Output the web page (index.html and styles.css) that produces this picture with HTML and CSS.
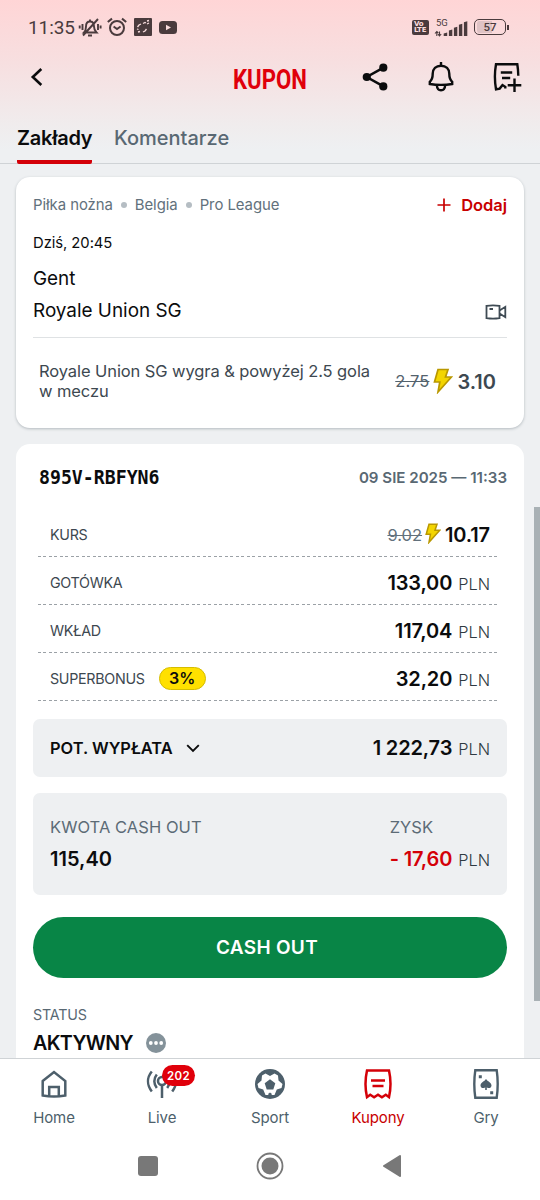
FILE: index.html
```html
<!DOCTYPE html>
<html lang="pl">
<head>
<meta charset="utf-8">
<title>Kupon</title>
<link rel="stylesheet" href="styles.css">
</head>
<body>
<div class="screen">
  <header class="top">
    <div class="statusbar">
      <span class="clock">11:35</span>
      <svg class="st-bell" width="24" height="20" viewBox="0 0 24 20" fill="none" stroke="#4a3b3d" stroke-width="1.9"><path d="M6 15.500c2-2 2-3 2-6 0-3 1.500-5 4-5s4 2 4 5c0 3 .5 4 2.500 6zM5 18.500 20 2M10 18.500h4M4.500 7v6M1.700 8.500v3M20 7v6M22.600 8.500v3M12 2.500v2"/></svg>
      <svg class="st-alarm" width="20" height="20" viewBox="0 0 20 20" fill="none" stroke="#4a3b3d" stroke-width="2"><circle cx="10" cy="11" r="7"/><path d="m6.600 9.500 3.400 2.500 3.600-2.500M.8 5 5 1.600M19.200 5 15 1.600"/></svg>
      <svg class="st-app" width="18" height="18" viewBox="0 0 18 18"><rect width="18" height="18" rx="1" fill="#4a3b3d"/><path d="m3.500 9 1.500-2 2-1M3 11l1.500.5M4 14l2-.5M9 14l2-1 1.500-2M9 5.500l2-1 1 .5M13 3l2-.5M13 6l2-1" fill="none" stroke="#f7dcdd" stroke-width="1.300"/></svg>
      <svg class="st-tube" width="18" height="13" viewBox="0 0 18 13"><rect width="18" height="13" rx="3.500" fill="#4a3b3d"/><path d="M7 3.700v5.600l5-2.800z" fill="#f9dcdd"/></svg>
      <span class="spacer"></span>
      <span class="volte"><span>Vo</span><span>LTE</span></span>
      <span class="network"><span class="fiveg">5G</span>
        <svg width="34" height="16" viewBox="0 0 34 16" fill="#4a3b3d"><path d="M2.800 15v-4.500M1 12.500l1.800-2 1.500 1.500M5.500 10.500V15M4 13.200 5.500 15l1.700-2" fill="none" stroke="#4a3b3d" stroke-width="1.100"/><path d="M9.700 12.500l3.500-1V15H9.700zM14.900 9.500l3.400-1V15h-3.400zM19.900 6.700l3.400-1V15h-3.400zM24.900 3.800l3.400-1V15h-3.400zM29.900 1.300l3.400-1V15h-3.400z"/></svg>
      </span>
      <span class="battery">57</span><i class="nub"></i>
    </div>
    <div class="navbar">
      <svg class="back" width="14" height="20" viewBox="0 0 14 20" fill="none" stroke="#0b0c0d" stroke-width="2.600"><path d="m12.300 2-8.500 8 8.500 8"/></svg>
      <h1 class="title">KUPON</h1>
      <svg class="share" width="28" height="30" viewBox="0 0 28 30" fill="#0b0c0d"><path d="M21.500 5.700 4.700 15l16.800 9.300" fill="none" stroke="#0b0c0d" stroke-width="2.500"/><circle cx="21.300" cy="5.700" r="4.100"/><circle cx="4.800" cy="15" r="4.100"/><circle cx="21.300" cy="24.400" r="4.100"/></svg>
      <svg class="bell" width="28" height="32" viewBox="0 0 28 32" fill="none" stroke="#0b0c0d" stroke-width="2.400"><path d="M14 1v4M2.800 23v-2.200c3-2.500 2.900-5 2.900-8C5.700 8 9 4.700 14 4.700s8.300 3.300 8.300 8.100c0 3-.1 5.500 2.900 8V23c-7.300 1.200-15.100 1.200-22.400 0zM9.800 24c.2 3 1.700 5.300 4.200 5.300s4-2.300 4.200-5.300"/></svg>
      <svg class="addslip" width="30" height="31" viewBox="0 0 30 31" fill="none" stroke="#0b0c0d" stroke-width="2.400"><path d="M13.300 26.500v-1.700L10.500 23 7.700 26.600 4 27.300C2.500 18.500 2.500 10.500 4 2.200h21.300c.6 3.500.9 7 1 11.600M8.800 10.500h11.400M10 16h8.200M22.500 16.500V30M15.700 23.200h13.600"/></svg>
    </div>
    <nav class="tabs"><span class="tab active">Zakłady</span><span class="tab second">Komentarze</span></nav>
  </header>

  <main class="content">
    <section class="card event">
      <div class="crumbs"><span>Piłka nożna</span><i class="dot"></i><span>Belgia</span><i class="dot"></i><span>Pro League</span><span class="spacer"></span>
        <svg width="14" height="14" viewBox="0 0 14 14" stroke="#c80000" stroke-width="1.700"><path d="M7 .5v13M.5 7h13"/></svg><b class="add">Dodaj</b></div>
      <div class="when">Dziś, 20:45</div>
      <div class="team home">Gent</div>
      <div class="team away"><span>Royale Union SG</span>
        <svg width="22" height="16" viewBox="0 0 22 16" fill="none" stroke="#3f4b54" stroke-width="1.800"><path d="M1.500 1.800q6.500-1 13 0v12.400q-6.500 1-13 0zM15 6.300l5.300-3.500v10.400L15 9.700M4.500 5H8"/></svg></div>
      <div class="pick"><p class="market">Royale Union SG wygra &amp; powyżej 2.5 gola w meczu</p>
        <div class="odds"><s>2.75</s>
          <svg width="20" height="26" viewBox="0 0 20 26"><path d="M5 1.500h10l-2.500 7.500H18.500L5 24 6.800 14H1.500z" fill="#f3d500" stroke="#b99800" stroke-width="1.700"/></svg>
          <b>3.10</b></div></div>
    </section>

    <section class="card slip">
      <div class="slip-head"><span class="code">895V-RBFYN6</span><span class="date">09 SIE 2025 — 11:33</span></div>
      <div class="rows">
        <div class="row"><span class="label">KURS</span><span class="value boosted"><s>9.02</s><svg width="16" height="21" viewBox="0 0 20 26"><path d="M5 1.500h10l-2.500 7.500H18.500L5 24 6.800 14H1.500z" fill="#f3d500" stroke="#b99800" stroke-width="1.900"/></svg><b>10.17</b></span></div>
        <div class="row"><span class="label">GOTÓWKA</span><span class="value"><b>133,00</b><em>PLN</em></span></div>
        <div class="row"><span class="label">WKŁAD</span><span class="value"><b>117,04</b><em>PLN</em></span></div>
        <div class="row"><span class="label">SUPERBONUS</span><span class="bonus">3%</span><span class="value"><b>32,20</b><em>PLN</em></span></div>
      </div>
      <div class="box payout"><span class="payout-label">POT. WYPŁATA</span><svg width="14" height="9" viewBox="0 0 14 9" fill="none" stroke="#0b0c0d" stroke-width="1.900"><path d="m1.200 1.200 5.800 5.800 5.800-5.800"/></svg><span class="value"><b>1 222,73</b><em>PLN</em></span></div>
      <div class="box cash">
        <div><div class="cash-label">KWOTA CASH OUT</div><div class="value"><b class="amount">115,40</b></div></div>
        <div><div class="cash-label">ZYSK</div><div class="value loss"><b>- 17,60</b><em>PLN</em></div></div>
      </div>
      <button class="cashout">CASH OUT</button>
      <div class="status-label">STATUS</div>
      <div class="status"><span>AKTYWNY</span><svg width="20" height="20" viewBox="0 0 20 20"><circle cx="10" cy="10" r="10" fill="#84929a"/><g fill="#fff"><circle cx="4.800" cy="10" r="1.900"/><circle cx="10" cy="10" r="1.900"/><circle cx="15.200" cy="10" r="1.900"/></g></svg></div>
    </section>
    <i class="scrollbar"></i>
  </main>

  <nav class="bottom">
    <a class="item"><svg width="32" height="32" viewBox="0 0 32 32" fill="none" stroke="#4d5f6b" stroke-width="2.500"><path d="M4.700 13 16 4l11.300 9v14.500q-11.300 2-22.600 0zM11.200 28.500V19h9.600v9.500"/></svg><span>Home</span></a>
    <a class="item live"><svg width="32" height="32" viewBox="0 0 32 32" fill="none" stroke="#4d5f6b" stroke-width="2.500"><circle cx="16" cy="13" r="4"/><path d="M16 17v13M5.800 3.500c-5 6-5 13.500 0 20M10.800 6.500c-3.300 4-3.300 9.500 0 13.500M26.200 3.500c5 6 5 13.500 0 20M21.200 6.500c3.300 4 3.300 9.500 0 13.500"/></svg><span class="badge">202</span><span>Live</span></a>
    <a class="item"><svg width="32" height="32" viewBox="0 0 32 32"><circle cx="16" cy="16" r="15" fill="#4d5f6b"/><path d="M11.500 5.500 16 8l4.500-2.500 3.500 2 .5 5 4 3.500-1 4-4.700 1.500L20.500 27h-9l-2.300-5.500L4.500 20l-1-4 4-3.500.5-5z" fill="#fff"/><path d="m16 11.300 5.300 3.900-2 6.200h-6.600l-2-6.200zM14 26l2-1.500 2 1.500-2 3z" fill="#4d5f6b"/></svg><span>Sport</span></a>
    <a class="item current"><svg width="32" height="32" viewBox="0 0 32 32" fill="none" stroke="#d40008" stroke-width="2.500"><path d="M5 2.500h22q3 13.500 0 26.700l-3.200-2.400-3.900 2.500-3.900-2.500-3.900 2.500-3.900-2.500L5 29.200Q2 16 5 2.500zM9 12.500h14M10.500 18h11"/></svg><span>Kupony</span></a>
    <a class="item"><svg width="32" height="32" viewBox="0 0 32 32" fill="none" stroke="#4d5f6b" stroke-width="2.400"><path d="M5.300 2.200h21.400q2 13.800 0 27.600H5.300q-2-13.800 0-27.600z"/><g fill="#4d5f6b" stroke="none"><path d="M16 11c1.500 2.500 5.500 3.500 5.500 6.500 0 2.500-3 3.500-4.700 1.700V22h-1.600v-2.800c-1.700 1.800-4.700.8-4.700-1.700C10.500 14.500 14.500 13.500 16 11z"/><path d="M8.800 7.200h3v3h-3zM20.200 23.200h3v3h-3z"/></g></svg><span>Gry</span></a>
  </nav>
  <div class="system">
    <svg width="20" height="20"><rect width="20" height="20" rx="3" fill="#787878"/></svg>
    <svg width="28" height="28" viewBox="0 0 28 28"><circle cx="14" cy="14" r="12.500" fill="none" stroke="#787878" stroke-width="1.800"/><circle cx="14" cy="14" r="8.500" fill="#787878"/></svg>
    <svg width="20" height="24" viewBox="0 0 20 24"><path d="M18 2 2 12l16 10z" fill="#787878" stroke="#787878" stroke-width="2" stroke-linejoin="round"/></svg>
  </div>
</div>
</body>
</html>
```
FILE: styles.css
```css
* { box-sizing: border-box; }
body { margin: 0; font-family: Inter, "Liberation Sans", sans-serif; color: #0b0c0d; }
.screen { width: 540px; height: 1200px; display: flex; flex-direction: column; overflow: hidden; background: #fff; }
svg { display: block; flex: none; }
b { font-weight: 600; }
em { font-style: normal; }
.spacer { flex: 1; }

.top { height: 164px; flex: none; background: linear-gradient(#ffd5d6 0, #f7dfe0 62px, #f0eced 125px, #eef0f2 150px); border-bottom: 1px solid #cfd3d6; }
.statusbar { height: 54px; display: flex; align-items: center; padding: 0 31px 0 28px; color: #4a3b3d; font-family: Roboto, sans-serif; }
.clock { width: 50px; margin-top: 1px; font-size: 19px; letter-spacing: -.1px; white-space: nowrap; }
.st-alarm { margin-left: 5px; }
.st-app { margin-left: 7px; }
.st-tube { margin-left: 7px; }
.volte { width: 17px; height: 15px; border-radius: 2px; background: #4a3b3d; color: #fbdcdd; display: flex; flex-direction: column; padding: 1px 1px 0 2px; font: 700 7px/6.500px "DejaVu Sans", sans-serif; letter-spacing: -.2px; margin-right: 5px; }
.network { width: 34px; height: 17px; position: relative; margin-right: 6px; }
.network svg { margin-top: 2px; }
.fiveg { position: absolute; left: 2px; top: -1px; font-size: 9.500px; line-height: 10px; }
.battery { width: 32px; height: 16px; border: 1.500px solid #4a3b3d; border-radius: 5px; font: 500 11.500px/12px Roboto, sans-serif; text-align: center; background: linear-gradient(90deg, #dfc3c5 56%, transparent 56%); background-clip: content-box; padding: 1px 2px; }
.nub { width: 2px; height: 5px; background: #4a3b3d; margin-left: 1px; }
.navbar { height: 54px; display: flex; align-items: center; padding-left: 29px; }
.back { margin-top: -9px; }
.title { margin: -2px 0 0 190px; width: 122px; font: 700 28px/32px Roboto, sans-serif; color: #e0000b; transform: scaleX(.79); transform-origin: left; }
.share { margin: -9px 0 0 7px; }
.bell { margin: -9px 0 0 36.500px; }
.addslip { margin: -7px 0 0 37px; }
.tabs { height: 56px; display: flex; padding-left: 17px; gap: 22px; font-size: 20px; line-height: 60px; font-weight: 500; color: #596873; }
.tab { height: 56px; }
.active { width: 75px; color: #0b0c0d; font-weight: 600; border-bottom: 4px solid #d40008; border-radius: 2px; letter-spacing: -.25px; }

.content { flex: none; height: 894px; position: relative; overflow: hidden; background: #eef0f2; padding: 13px 16px 0; display: flex; flex-direction: column; gap: 16px; }
.card { background: #fff; border-radius: 14px; flex: none; }
.event { height: 251px; padding: 16px 17px 0; box-shadow: 0 1px 3px #b4babf; }
.crumbs { height: 24px; display: flex; align-items: center; font-size: 14.900px; letter-spacing: -.05px; color: #62717c; }
.dot { width: 6px; height: 6px; border-radius: 50%; background: #b5bdc3; margin: 0 8px; }
.add { margin-left: 10px; margin-top: -1px; font-size: 16.500px; color: #c80000; }
.when { height: 24px; margin-top: 14px; line-height: 24px; font-size: 14.800px; letter-spacing: -.05px; }
.team { height: 32px; line-height: 32px; font-size: 18.900px; }
.home { margin-top: 8px; }
.away { display: flex; justify-content: space-between; align-items: center; }
.away svg { margin-top: 1px; }
.pick { margin-top: 10px; border-top: 1px solid #dfe2e4; padding: 23px 11px 0 6px; display: flex; justify-content: space-between; }
.market { margin: 0; width: 340px; font-size: 16.500px; letter-spacing: -.09px; line-height: 20px; color: #3d4850; }
.odds { height: 40px; display: flex; align-items: center; color: #3d4850; }
.odds s { font-size: 16.500px; letter-spacing: .1px; color: #53626d; }
.odds svg { margin: 0 4px; }
.odds b { font-size: 20px; margin-top: 1px; }

.slip { height: 640px; padding: 14px 17px 0; }
.slip-head { height: 40px; display: flex; justify-content: space-between; align-items: center; padding-left: 6px; }
.code { margin-top: -2px; font: 700 20px/24px "DejaVu Sans Mono", monospace; transform: scaleX(.91); transform-origin: left; }
.date { margin-top: -2px; font-size: 15.100px; font-weight: 600; color: #596873; }
.rows { padding: 11px 9px 0 5px; }
.row { height: 48px; display: flex; align-items: center; padding: 4px 8px 0 12px; background: repeating-linear-gradient(90deg, #9ba1a6 0 3px, transparent 3px 5.500px) bottom / 100% 1px no-repeat; }
.label { font-size: 14.300px; letter-spacing: -.3px; margin-bottom: 2px; color: #3d4850; }
.value { margin-left: auto; display: flex; align-items: baseline; font-size: 20px; white-space: nowrap; }
.value b { letter-spacing: -.15px; }
.value em { font-size: 16.300px; font-weight: 300; color: #2f3a42; margin-left: 6px; }
.boosted { align-items: center; }
.value s { font-size: 16.500px; color: #62717c; margin-top: -1px; }
.value svg { margin: -3px 4px 0 3px; }
.bonus { width: 47px; height: 23px; margin: -1px 0 0 14px; border: 1.500px solid #d5bd00; border-radius: 12px; background: #ffe000; text-align: center; font-size: 16px; font-weight: 600; line-height: 21px; }
.box { background: #eef0f2; border-radius: 7px; }
.payout { height: 58px; margin-top: 18px; padding: 0 17px; display: flex; align-items: center; }
.payout-label { font-size: 16.400px; font-weight: 600; margin-right: 13px; }
.cash { height: 102px; margin-top: 16px; padding: 18px 17px 0; display: flex; justify-content: space-between; line-height: 32px; }
.cash-label { font-size: 16.500px; letter-spacing: .05px; color: #5c6b76; }
.cash .value { margin-left: 0; }
.value .amount { letter-spacing: 0; }
.loss b { color: #d40008; }
.cashout { display: block; width: 100%; height: 61px; margin-top: 21.500px; padding: 0 6px 0 0; border: 0; border-radius: 31px; background: #088546; color: #fff; font: 600 19px Inter, sans-serif; letter-spacing: .3px; }
.status-label { margin-top: 26.500px; height: 22px; line-height: 22px; font-size: 14.300px; letter-spacing: -.2px; color: #596873; }
.status { height: 33px; display: flex; align-items: center; gap: 13px; font-size: 19.700px; letter-spacing: -.65px; font-weight: 600; }
.scrollbar { position: absolute; right: 0; top: 343px; width: 6px; height: 494px; background: #a9b1b5; }

.bottom { height: 74px; flex: none; border-top: 1px solid #cfd3d6; display: flex; color: #4d5f6b; font-size: 15px; }
.item { width: 108px; display: flex; flex-direction: column; align-items: center; padding-top: 9px; position: relative; line-height: 18px; gap: 9px; }
.item > span:last-child { letter-spacing: -.1px; }
.badge { position: absolute; left: 54px; top: 6px; width: 33px; height: 21px; border-radius: 11px; background: #e0000b; color: #fff; text-align: center; font-size: 11.500px; line-height: 22px; font-weight: 600; letter-spacing: .3px; }
.current { color: #c80000; }
.system { height: 68px; display: flex; align-items: center; padding-left: 138px; }
.system svg:nth-child(2) { margin-left: 98px; }
.system svg:nth-child(3) { margin-left: 98px; }
```
